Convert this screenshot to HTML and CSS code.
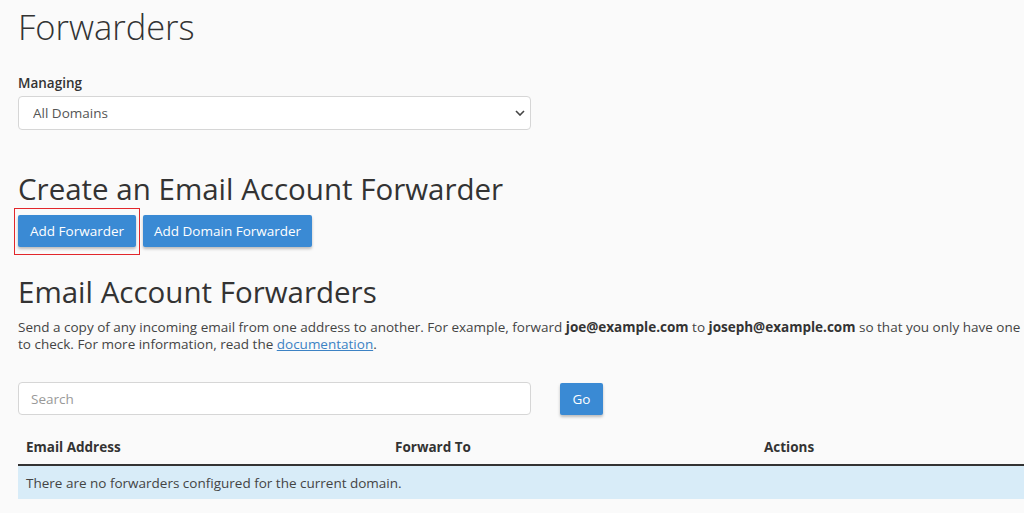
FILE: index.html
```html
<!DOCTYPE html>
<html lang="en">
<head>
    <meta charset="UTF-8">
    <meta name="viewport" content="width=device-width, initial-scale=1.0">
    <title>Forwarders</title>
    <link rel="stylesheet" href="styles.css">
</head>
<body>

    <div class="container">
        <h1 class="page-title">Forwarders</h1>

        <div class="form-group">
            <label class="field-label" for="domainSelect">Managing</label>
            <div class="select-wrap">
                <select id="domainSelect" class="form-control">
                    <option>All Domains</option>
                </select>
                <svg class="select-caret" width="10" height="6" viewBox="0 0 10 6">
                    <path d="M1 1l4 4 4-4" fill="none" stroke="#444" stroke-width="1.6"/>
                </svg>
            </div>
        </div>

        <h2 class="section-title create-title">Create an Email Account Forwarder</h2>
        <div class="button-row">
            <span class="highlight">
                <button class="btn btn-primary">Add Forwarder</button>
            </span>
            <button class="btn btn-primary domain-button">Add Domain Forwarder</button>
        </div>

        <h2 class="section-title">Email Account Forwarders</h2>
        <p class="description">
            Send a copy of any incoming email from one address to another. For example, forward <strong>joe@example.com</strong> to <strong>joseph@example.com</strong> so that you only have one to check. For more information, read the <a href="#">documentation</a>.
        </p>

        <div class="search-row">
            <input type="text" class="form-control search-input" placeholder="Search">
            <button class="btn btn-primary go-button">Go</button>
        </div>

        <table class="forwarders-table">
            <thead>
                <tr>
                    <th>Email Address</th>
                    <th>Forward To</th>
                    <th>Actions</th>
                </tr>
            </thead>
            <tbody>
                <tr class="info-row">
                    <td colspan="3">There are no forwarders configured for the current domain.</td>
                </tr>
            </tbody>
        </table>
    </div>

</body>
</html>
```

FILE: styles.css
```css
html, body {
    overflow: hidden;
}

body {
    font-family: "Open Sans", Arial, sans-serif;
    font-size: 13.5px;
    color: #333;
    background: #fafafa;
    margin: 0;
    padding: 0;
}

.container {
    width: 1010px;
    padding-left: 18px;
}

.page-title {
    font-size: 34.5px;
    font-weight: 300;
    margin: 0;
    padding-top: 4px;
    line-height: 46px;
    color: #333;
}

.form-group {
    margin-top: 24px;
}

.field-label {
    display: block;
    font-weight: 600;
    font-size: 13.5px;
    line-height: 18px;
    margin-bottom: 4px;
}

.select-wrap {
    position: relative;
    width: 513px;
}

.form-control {
    display: block;
    box-sizing: border-box;
    width: 513px;
    height: 34px;
    padding: 6px 14px;
    font-family: "Open Sans", Arial, sans-serif;
    font-size: 13.5px;
    color: #555;
    background: #fff;
    border: 1px solid #d6d6d6;
    border-radius: 4px;
    appearance: none;
    -webkit-appearance: none;
}

.select-caret {
    position: absolute;
    right: 6px;
    top: 14px;
}

.section-title {
    font-size: 29.5px;
    font-weight: 400;
    margin: 0;
    line-height: 40px;
    color: #333;
}

.create-title {
    margin-top: 39px;
}

.button-row {
    display: flex;
    align-items: flex-start;
    gap: 3px;
    margin-top: -1px;
    margin-left: -4px;
}

.highlight {
    display: inline-block;
    padding: 6px 3px 7px 3px;
    border: 1px solid #e2262b;
}

.btn {
    font-family: "Open Sans", Arial, sans-serif;
    font-size: 13.5px;
    color: #fff;
    border: none;
    border-radius: 2px;
    height: 32px;
    padding: 0 12px;
    cursor: pointer;
}

.btn-primary {
    background-color: #3a8ad4;
    box-shadow: 0 2px 3px rgba(0, 0, 0, 0.25);
}

.domain-button {
    margin-top: 7px;
    padding: 0 11px;
}

.button-row + .section-title {
    margin-top: 17px;
}

.description {
    margin: 7px 0 0 0;
    line-height: 17px;
    font-size: 13.5px;
    color: #444;
}

.description strong {
    color: #333;
}

.description a {
    color: #3c82c4;
    text-decoration: underline;
}

.search-row {
    display: flex;
    align-items: center;
    gap: 29px;
    margin-top: 29px;
}

.search-input {
    height: 33px;
    padding-left: 12px;
}

.search-input::placeholder {
    color: #999;
}

.go-button {
    width: 43px;
    padding: 0;
    height: 32px;
}

.forwarders-table {
    width: 1107px;
    table-layout: fixed;
    border-collapse: collapse;
    margin-top: 15px;
}

.forwarders-table th {
    text-align: left;
    font-weight: 700;
    font-size: 13.5px;
    height: 34px;
    padding: 0 8px;
    border-bottom: 2px solid #333;
    color: #333;
}

.forwarders-table td {
    padding: 0 8px;
    height: 33px;
    color: #444;
}

.info-row td {
    background-color: #d8ecf8;
}
```
